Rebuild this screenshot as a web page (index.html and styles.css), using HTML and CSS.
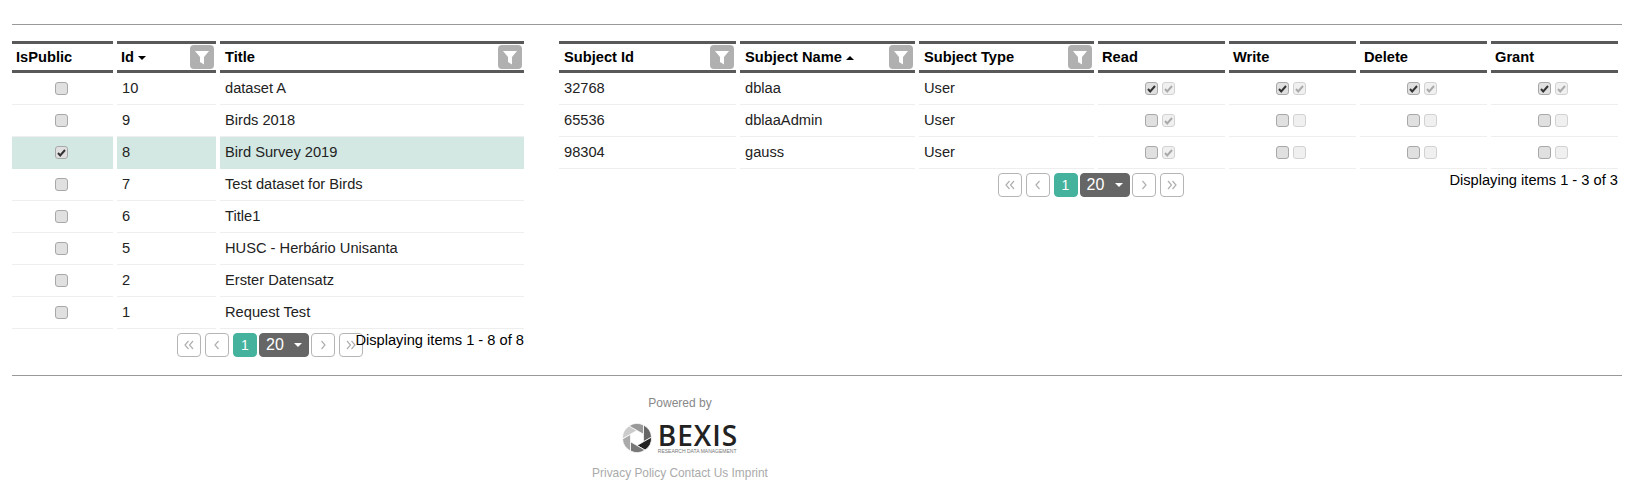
FILE: index.html
```html
<!DOCTYPE html>
<html>
<head>
    <title>Dataset Permissions</title>
    <link rel="stylesheet" href="styles.css">
</head>
<body>
    <hr class="rule">
    <div class="panels">
        <div class="panel panel-left">
            <table class="grid">
                <colgroup>
                    <col class="c-public"><col class="c-id"><col>
                </colgroup>
                <thead>
                    <tr>
                        <th><div class="head">IsPublic</div></th>
                        <th><div class="head"><span>Id <span class="sort-down"></span></span>
                            <button class="filter"><svg viewBox="0 0 24 24" width="24" height="24"><path d="M5 6H19L14 12V19.5L10 17V12Z"/></svg></button></div></th>
                        <th class="th-pad"><div class="head">Title
                            <button class="filter"><svg viewBox="0 0 24 24" width="24" height="24"><path d="M5 6H19L14 12V19.5L10 17V12Z"/></svg></button></div></th>
                    </tr>
                </thead>
                <tbody>
                    <tr><td><div class="checks"><input type="checkbox"></div></td><td>10</td><td>dataset A</td></tr>
                    <tr><td><div class="checks"><input type="checkbox"></div></td><td>9</td><td>Birds 2018</td></tr>
                    <tr class="selected"><td><div class="checks"><input type="checkbox" checked></div></td><td>8</td><td>Bird Survey 2019</td></tr>
                    <tr><td><div class="checks"><input type="checkbox"></div></td><td>7</td><td>Test dataset for Birds</td></tr>
                    <tr><td><div class="checks"><input type="checkbox"></div></td><td>6</td><td>Title1</td></tr>
                    <tr><td><div class="checks"><input type="checkbox"></div></td><td>5</td><td>HUSC - Herbário Unisanta</td></tr>
                    <tr><td><div class="checks"><input type="checkbox"></div></td><td>2</td><td>Erster Datensatz</td></tr>
                    <tr><td><div class="checks"><input type="checkbox"></div></td><td>1</td><td>Request Test</td></tr>
                </tbody>
            </table>
            <div class="pager">
                <button class="page"><svg viewBox="0 0 12 12" width="12" height="12"><path d="M5.5 2L2 6L5.5 10M10 2L6.5 6L10 10"/></svg></button>
                <button class="page"><svg viewBox="0 0 12 12" width="12" height="12"><path d="M7.5 2L4 6L7.5 10"/></svg></button>
                <button class="page current">1</button>
                <button class="page size">20 <span class="sort-down"></span></button>
                <button class="page"><svg viewBox="0 0 12 12" width="12" height="12"><path d="M4.5 2L8 6L4.5 10"/></svg></button>
                <button class="page"><svg viewBox="0 0 12 12" width="12" height="12"><path d="M2 2L5.5 6L2 10M6.5 2L10 6L6.5 10"/></svg></button>
                <span class="info">Displaying items 1 - 8 of 8</span>
            </div>
        </div>

        <div class="panel panel-right">
            <table class="grid">
                <colgroup>
                    <col class="c-subject"><col class="c-name"><col class="c-type">
                    <col class="c-perm"><col class="c-perm"><col class="c-perm"><col class="c-perm">
                </colgroup>
                <thead>
                    <tr>
                        <th class="th-pad"><div class="head">Subject Id
                            <button class="filter"><svg viewBox="0 0 24 24" width="24" height="24"><path d="M5 6H19L14 12V19.5L10 17V12Z"/></svg></button></div></th>
                        <th class="th-pad"><div class="head"><span>Subject Name <span class="sort-up"></span></span>
                            <button class="filter"><svg viewBox="0 0 24 24" width="24" height="24"><path d="M5 6H19L14 12V19.5L10 17V12Z"/></svg></button></div></th>
                        <th class="th-pad"><div class="head">Subject Type
                            <button class="filter"><svg viewBox="0 0 24 24" width="24" height="24"><path d="M5 6H19L14 12V19.5L10 17V12Z"/></svg></button></div></th>
                        <th><div class="head">Read</div></th>
                        <th><div class="head">Write</div></th>
                        <th><div class="head">Delete</div></th>
                        <th><div class="head">Grant</div></th>
                    </tr>
                </thead>
                <tbody>
                    <tr>
                        <td>32768</td><td>dblaa</td><td>User</td>
                        <td><div class="checks"><input type="checkbox" checked><input type="checkbox" checked disabled></div></td>
                        <td><div class="checks"><input type="checkbox" checked><input type="checkbox" checked disabled></div></td>
                        <td><div class="checks"><input type="checkbox" checked><input type="checkbox" checked disabled></div></td>
                        <td><div class="checks"><input type="checkbox" checked><input type="checkbox" checked disabled></div></td>
                    </tr>
                    <tr>
                        <td>65536</td><td>dblaaAdmin</td><td>User</td>
                        <td><div class="checks"><input type="checkbox"><input type="checkbox" checked disabled></div></td>
                        <td><div class="checks"><input type="checkbox"><input type="checkbox" disabled></div></td>
                        <td><div class="checks"><input type="checkbox"><input type="checkbox" disabled></div></td>
                        <td><div class="checks"><input type="checkbox"><input type="checkbox" disabled></div></td>
                    </tr>
                    <tr>
                        <td>98304</td><td>gauss</td><td>User</td>
                        <td><div class="checks"><input type="checkbox"><input type="checkbox" checked disabled></div></td>
                        <td><div class="checks"><input type="checkbox"><input type="checkbox" disabled></div></td>
                        <td><div class="checks"><input type="checkbox"><input type="checkbox" disabled></div></td>
                        <td><div class="checks"><input type="checkbox"><input type="checkbox" disabled></div></td>
                    </tr>
                </tbody>
            </table>
            <div class="pager">
                <button class="page"><svg viewBox="0 0 12 12" width="12" height="12"><path d="M5.5 2L2 6L5.5 10M10 2L6.5 6L10 10"/></svg></button>
                <button class="page"><svg viewBox="0 0 12 12" width="12" height="12"><path d="M7.5 2L4 6L7.5 10"/></svg></button>
                <button class="page current">1</button>
                <button class="page size">20 <span class="sort-down"></span></button>
                <button class="page"><svg viewBox="0 0 12 12" width="12" height="12"><path d="M4.5 2L8 6L4.5 10"/></svg></button>
                <button class="page"><svg viewBox="0 0 12 12" width="12" height="12"><path d="M2 2L5.5 6L2 10M6.5 2L10 6L6.5 10"/></svg></button>
                <span class="info">Displaying items 1 - 3 of 3</span>
            </div>
        </div>
    </div>

    <hr class="rule rule-footer">
    <footer class="footer">
        <div class="powered">Powered by</div>
        <div class="logo">
            <svg class="logo-mark" viewBox="0 0 30 30" width="30" height="30">
                <g stroke="#fff" stroke-width="0.7">
                    <path fill="#666" d="M21.5 11.25L21.5 2.04A14.5 14.5 0 0 1 29.47 14.15L21.5 18.75Z"/>
                    <path fill="#222" transform="rotate(60 15 15)" d="M21.5 11.25L21.5 2.04A14.5 14.5 0 0 1 29.47 14.15L21.5 18.75Z"/>
                    <path fill="#777" transform="rotate(120 15 15)" d="M21.5 11.25L21.5 2.04A14.5 14.5 0 0 1 29.47 14.15L21.5 18.75Z"/>
                    <path fill="#aaa" transform="rotate(180 15 15)" d="M21.5 11.25L21.5 2.04A14.5 14.5 0 0 1 29.47 14.15L21.5 18.75Z"/>
                    <path fill="#ccc" transform="rotate(240 15 15)" d="M21.5 11.25L21.5 2.04A14.5 14.5 0 0 1 29.47 14.15L21.5 18.75Z"/>
                    <path fill="#999" transform="rotate(300 15 15)" d="M21.5 11.25L21.5 2.04A14.5 14.5 0 0 1 29.47 14.15L21.5 18.75Z"/>
                </g>
            </svg>
            <div class="logo-text">
                <div class="logo-name">BEXIS</div>
                <div class="logo-sub">RESEARCH DATA MANAGEMENT</div>
            </div>
        </div>
        <div class="links"><a href="#">Privacy Policy</a> <a href="#">Contact Us</a> <a href="#">Imprint</a></div>
    </footer>
</body>
</html>
```

FILE: styles.css
```css
body {
    font-family: "Liberation Sans", Arial, sans-serif;
    font-size: 14.67px;
    color: #222;
    background-color: #fff;
    margin: 0;
    padding: 24px 15px 0 12px;
}
.rule {
    border: none;
    border-top: 1px solid #999;
    margin: 0;
}
.panels {
    display: flex;
    align-items: flex-start;
    gap: 35px;
    margin-top: 16px;
}
.panel-left {
    width: 512px;
    flex: none;
}
.panel-right {
    width: 1059px;
    flex: none;
}
.grid {
    border-collapse: separate;
    border-spacing: 4px 0;
    table-layout: fixed;
    width: calc(100% + 8px);
    margin: 0 -4px;
}
.c-public { width: 101px; }
.c-id { width: 99px; }
.c-subject { width: 177px; }
.c-name { width: 175px; }
.c-type { width: 175px; }
.c-perm { width: 127px; }
.grid th {
    height: 26px;
    padding: 0 2px 0 4px;
    border-top: 3px solid #595959;
    border-bottom: 3px solid #595959;
    text-align: left;
    color: #000;
}
.grid th.th-pad {
    padding-left: 5px;
}
.head {
    display: flex;
    align-items: center;
    justify-content: space-between;
}
.grid td {
    height: 29px;
    padding: 0 4px 2px 5px;
    border-bottom: 1px solid #eee;
}
.selected td {
    background-color: #d3e8e2;
    border-bottom-color: #d3e8e2;
}
.filter {
    width: 24px;
    height: 24px;
    padding: 0;
    border: none;
    border-radius: 4px;
    background-color: #b0b0b0;
}
.filter svg {
    display: block;
    fill: #fff;
}
.sort-down,
.sort-up {
    display: inline-block;
    width: 0;
    height: 0;
    border-left: 4.5px solid transparent;
    border-right: 4.5px solid transparent;
    vertical-align: 2px;
}
.sort-down {
    border-top: 4.5px solid currentColor;
}
.sort-up {
    border-bottom: 4.5px solid currentColor;
}
.checks {
    display: flex;
    justify-content: center;
    gap: 4px;
    margin-top: 2px;
    padding-right: 4px;
}
.checks input {
    appearance: none;
    -webkit-appearance: none;
    display: block;
    width: 13px;
    height: 13px;
    margin: 0;
    border: 1px solid #a8a8a8;
    border-radius: 3px;
    background-color: #e0e0e0;
    background-repeat: no-repeat;
    background-position: center;
}
.checks input:checked {
    background-image: url("data:image/svg+xml,%3Csvg xmlns='http://www.w3.org/2000/svg' width='11' height='11'%3E%3Cpath d='M2 6l2.2 2.4L9 3' fill='none' stroke='%23333' stroke-width='2'/%3E%3C/svg%3E");
}
.checks input:disabled {
    border-color: #d2d2d2;
    background-color: #f0f0f0;
}
.checks input:checked:disabled {
    background-image: url("data:image/svg+xml,%3Csvg xmlns='http://www.w3.org/2000/svg' width='11' height='11'%3E%3Cpath d='M2 6l2.2 2.4L9 3' fill='none' stroke='%23aaa' stroke-width='2'/%3E%3C/svg%3E");
}
.pager {
    position: relative;
    display: flex;
    justify-content: center;
    gap: 4px;
    padding: 4px 0 0 4px;
}
.page {
    display: flex;
    align-items: center;
    justify-content: center;
    width: 24px;
    height: 24px;
    padding: 0;
    border: 1px solid #b5b5b5;
    border-radius: 4px;
    background-color: #fff;
    color: #aaa;
    font-family: inherit;
    font-size: 14px;
}
.page svg {
    display: block;
    fill: none;
    stroke: #b0b0b0;
    stroke-width: 1.2;
}
.page.current {
    background-color: #45b29d;
    border-color: #45b29d;
    color: #fff;
}
.page.size {
    justify-content: flex-start;
    width: 50px;
    margin: 0 -2px;
    background-color: #666;
    border-color: #666;
    color: #fff;
    font-size: 16px;
    padding-left: 6px;
    white-space: pre;
}
.page.size .sort-down {
    margin-left: 6px;
    vertical-align: 1px;
}
.info {
    position: absolute;
    top: 3px;
    right: 0;
    color: #000;
}
.rule-footer {
    margin-top: 18px;
}
.footer {
    width: 1336px;
    padding-top: 20px;
    text-align: center;
    font-size: 12px;
    color: #888;
}
.logo {
    display: flex;
    justify-content: center;
    align-items: center;
    gap: 6px;
    margin-top: 12px;
    color: #222;
}
.logo-mark {
    display: block;
}
.logo-text {
    text-align: left;
}
.logo-name {
    font-family: "Open Sans", sans-serif;
    font-size: 28px;
    font-weight: 600;
    line-height: 26px;
    letter-spacing: 1px;
}
.logo-sub {
    font-size: 5px;
    line-height: 6px;
    color: #777;
    white-space: nowrap;
}
.links {
    margin-top: 12px;
    font-size: 11.9px;
}
.links a {
    color: #aaa;
    text-decoration: none;
}
```
